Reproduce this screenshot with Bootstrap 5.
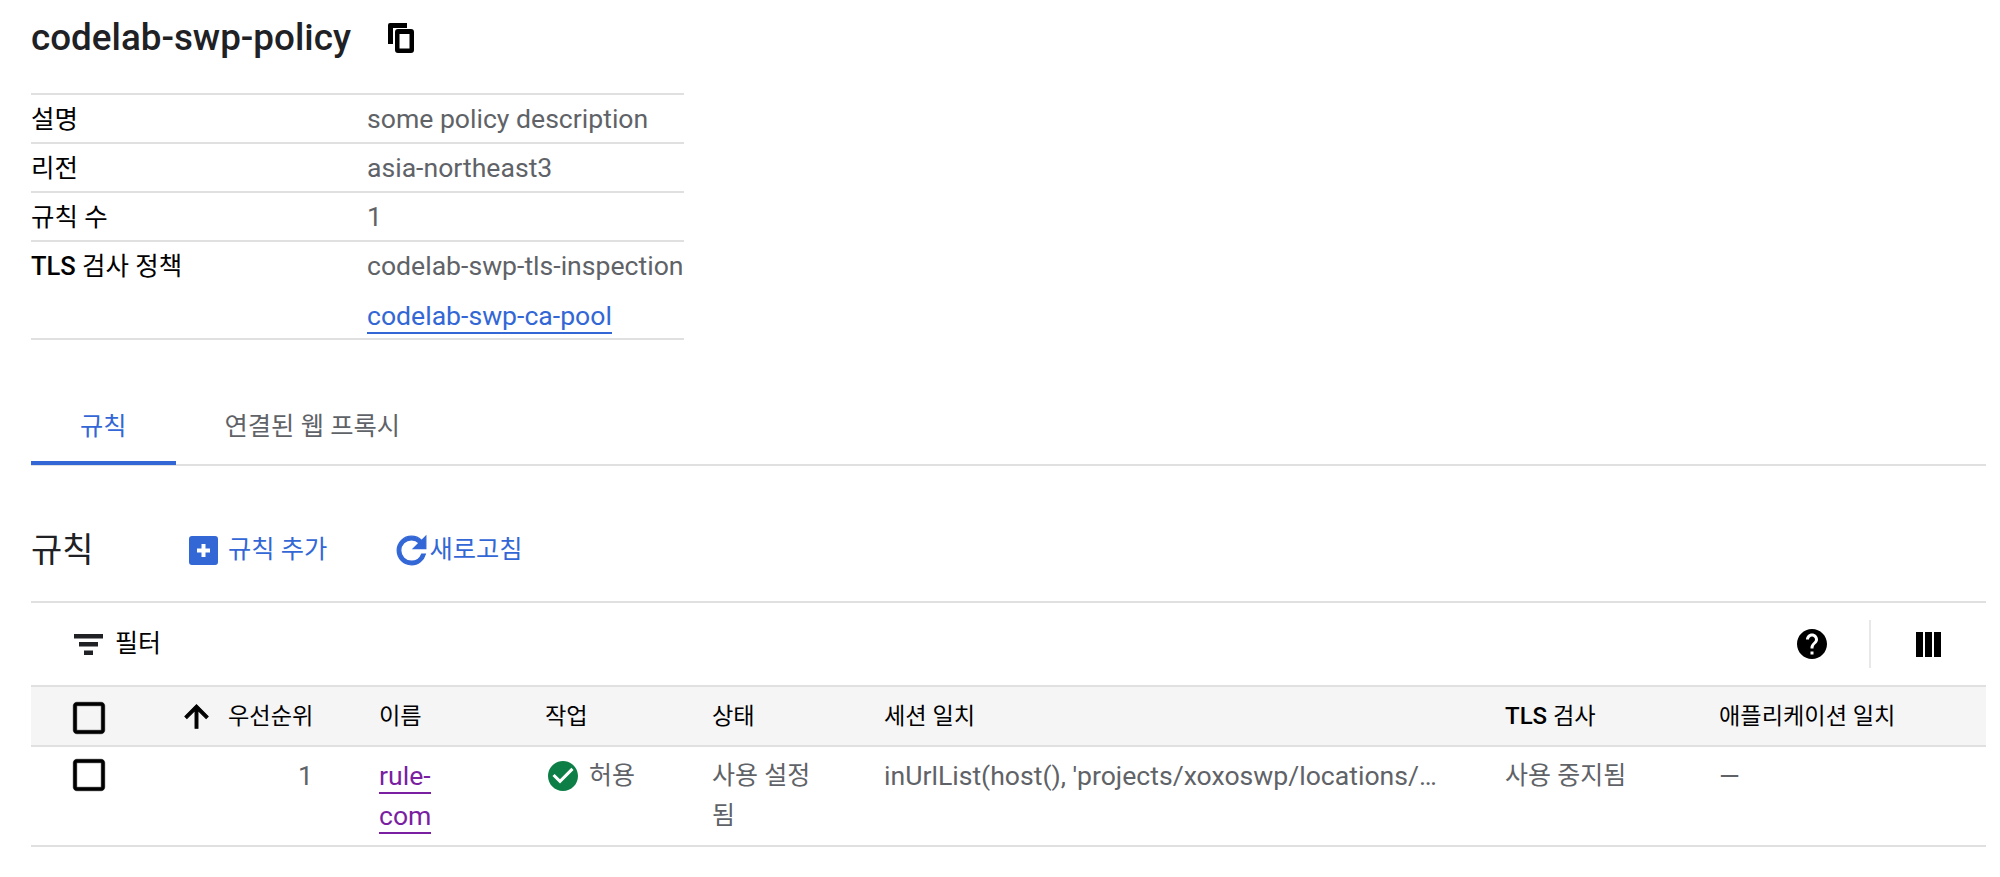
<!DOCTYPE html>
<html lang="ko">

<head>
    <meta charset="UTF-8">
    <title>codelab-swp-policy</title>
    <link href="https://cdn.jsdelivr.net/npm/bootstrap@5.3.0/dist/css/bootstrap.min.css" rel="stylesheet">
    <style>
        body {
            font-family: Roboto, "Noto Sans CJK KR", sans-serif;
            font-size: 26.6px;
            color: #202124;
            background: #fff;
        }

        svg {
            fill: currentColor;
            flex: none;
        }

        .icon-black {
            fill: #000;
        }

        .icon-green {
            fill: #0d7f46;
        }

        .icon-heavy {
            stroke: currentColor;
            stroke-width: .7;
        }

        .ko-text {
            font-size: 25px;
        }

        .policy-page {
            padding: 0 14px 0 31px;
        }

        .policy-title {
            height: 93px;
            padding-bottom: 17px;
            gap: 37px;
        }

        .policy-title h1 {
            font-size: 36.8px;
            font-weight: 500;
            margin: 0;
            color: #202124;
        }

        .info-table {
            width: 653px;
            border-top: 2px solid #e0e0e0;
        }

        .info-row {
            border-bottom: 2px solid #e0e0e0;
            min-height: 49px;
            line-height: 48px;
            height: 49px;
        }

        .info-row.tall-row {
            height: 98px;
        }

        .info-label {
            width: 336px;
            font-size: 25.5px;
            color: #000;
        }

        .info-label b {
            font-weight: 500;
        }

        .info-value {
            color: #5f6368;
            white-space: nowrap;
        }

        .link-line {
            padding-top: 2px;
        }

        .blue-link {
            color: #3367d6;
            text-decoration: none;
            border-bottom: 2px solid #3367d6;
            padding-bottom: 1px;
        }

        .tab-strip {
            margin-top: 49px;
            height: 77px;
            border-bottom: 2px solid #e0e0e0;
        }

        .tab-item {
            color: #5f6368;
            font-size: 25.3px;
            height: 76px;
            line-height: 76px;
            padding: 0 49px;
        }

        .tab-item.selected {
            color: #3367d6;
            border-bottom: 4px solid #3367d6;
        }

        .rules-head {
            height: 137px;
            padding-top: 33px;
            border-bottom: 2px solid #e0e0e0;
        }

        .rules-head h2 {
            font-size: 34px;
            font-weight: 400;
            margin: 0 66px 0 0;
            width: 92px;
        }

        .blue-action {
            color: #3367d6;
            font-size: 25.3px;
        }

        .add-action {
            gap: 10px;
            margin-right: 63px;
        }

        .refresh-action span {
            margin-left: -4px;
        }

        .filter-bar {
            height: 82px;
            padding: 0 45px 0 43px;
        }

        .filter-bar .filter-text {
            font-size: 25px;
            margin-left: 12px;
            color: #000;
        }

        .bar-divider {
            width: 2px;
            height: 48px;
            background: #e8e8e8;
            margin: 0 45px 0 39px;
        }

        .rule-table {
            table-layout: fixed;
            width: 100%;
            margin: 0;
            color: #5f6368;
        }

        .rule-table col:nth-child(1) { width: 144px; }
        .rule-table col:nth-child(2) { width: 188px; }
        .rule-table col:nth-child(3) { width: 166px; }
        .rule-table col:nth-child(4) { width: 167px; }
        .rule-table col:nth-child(5) { width: 172px; }
        .rule-table col:nth-child(6) { width: 621px; }
        .rule-table col:nth-child(7) { width: 214px; }

        .rule-table th,
        .rule-table td {
            padding: 0 16px;
            border: 0;
            box-shadow: none;
            line-height: 40px;
            vertical-align: top;
        }

        .rule-table thead tr {
            border-top: 2px solid #e0e0e0;
            border-bottom: 2px solid #e0e0e0;
        }

        .rule-table th {
            background: #f5f5f5;
            color: #000;
            font-weight: 400;
            font-size: 23.2px;
            height: 60px;
            vertical-align: middle;
        }

        .rule-table th b {
            font-weight: 500;
            font-size: 24px;
        }

        .rule-table tbody tr {
            border-bottom: 2px solid #e0e0e0;
        }

        .rule-table td {
            height: 98px;
            padding-top: 9px;
            padding-bottom: 9px;
        }

        .rule-table td.num-cell {
            padding-right: 50px;
        }

        .visited-link {
            color: #7b1fa2;
            text-decoration: none;
            border-bottom: 2px solid #7b1fa2;
            padding-bottom: 1px;
        }

        .box-icon {
            display: block;
            margin-left: 37px;
            margin-top: 4px;
            stroke: #000;
            stroke-width: .3;
        }

        .box-icon.row-box {
            margin-top: 7px;
        }

        .sort-label {
            margin-left: 14px;
        }
    </style>
</head>

<body>
    <div class="policy-page">
        <div class="policy-title d-flex align-items-center">
            <h1>codelab-swp-policy</h1>
            <svg class="icon-black" width="26" height="30" viewBox="0 0 26 30">
                <path d="M2 0h17v5H5v16H0V2a2 2 0 0 1 2-2z" />
                <path fill-rule="evenodd" d="M10 6h13a3 3 0 0 1 3 3v18a3 3 0 0 1-3 3H10a3 3 0 0 1-3-3V9a3 3 0 0 1 3-3zm1.5 5v14.500h10V11z" />
            </svg>
        </div>

        <div class="info-table">
            <div class="info-row d-flex">
                <div class="info-label">설명</div>
                <div class="info-value">some policy description</div>
            </div>
            <div class="info-row d-flex">
                <div class="info-label">리전</div>
                <div class="info-value">asia-northeast3</div>
            </div>
            <div class="info-row d-flex">
                <div class="info-label">규칙 수</div>
                <div class="info-value">1</div>
            </div>
            <div class="info-row tall-row d-flex">
                <div class="info-label"><b>TLS</b> 검사 정책</div>
                <div class="info-value">
                    <div>codelab-swp-tls-inspection</div>
                    <div class="link-line"><a href="#" class="blue-link">codelab-swp-ca-pool</a></div>
                </div>
            </div>
        </div>

        <div class="tab-strip d-flex">
            <div class="tab-item selected">규칙</div>
            <div class="tab-item">연결된 웹 프록시</div>
        </div>

        <div class="rules-head d-flex align-items-center">
            <h2>규칙</h2>
            <div class="blue-action add-action d-flex align-items-center">
                <svg width="29" height="29" viewBox="0 0 29 29">
                    <path fill-rule="evenodd" d="M3 0h23a3 3 0 0 1 3 3v23a3 3 0 0 1-3 3H3a3 3 0 0 1-3-3V3a3 3 0 0 1 3-3zM12.500 8v4.500H8v4h4.500V21h4v-4.500H21v-4h-4.500V8z" />
                </svg>
                <span>규칙 추가</span>
            </div>
            <div class="blue-action refresh-action d-flex align-items-center">
                <svg class="icon-heavy" width="43" height="43" viewBox="0 0 24 24">
                    <path d="M17.65 6.35C16.2 4.9 14.21 4 12 4c-4.42 0-7.99 3.58-7.99 8s3.57 8 7.99 8c3.73 0 6.84-2.55 7.73-6h-2.08c-.82 2.33-3.04 4-5.65 4-3.31 0-6-2.69-6-6s2.69-6 6-6c1.66 0 3.14.69 4.22 1.78L13 11h7V4l-2.35 2.35z" />
                </svg>
                <span>새로고침</span>
            </div>
        </div>

        <div class="filter-bar d-flex align-items-center">
            <svg width="29" height="21" viewBox="0 0 29 21">
                <path d="M0 0h29v4.500H0zM5 8h19v4.500H5zM10 16.500h9V21h-9z" />
            </svg>
            <span class="filter-text">필터</span>
            <svg class="icon-black ms-auto" width="36" height="36" viewBox="0 0 24 24">
                <path d="M12 2C6.48 2 2 6.48 2 12s4.48 10 10 10 10-4.48 10-10S17.52 2 12 2zm1 17h-2v-2h2v2zm2.070-7.750l-.9.92C13.450 12.900 13 13.500 13 15h-2v-.5c0-1.100.45-2.100 1.170-2.830l1.240-1.260c.37-.36.59-.86.59-1.410 0-1.100-.9-2-2-2s-2 .9-2 2H8c0-2.210 1.790-4 4-4s4 1.790 4 4c0 .88-.36 1.680-.93 2.250z" />
            </svg>
            <div class="bar-divider"></div>
            <svg class="icon-black" width="25" height="25" viewBox="0 0 25 25">
                <path d="M0 0h7v25H0zM9 0h7v25H9zM18 0h7v25h-7z" />
            </svg>
        </div>

        <table class="table rule-table">
            <colgroup>
                <col>
                <col>
                <col>
                <col>
                <col>
                <col>
                <col>
                <col>
            </colgroup>
            <thead>
                <tr>
                    <th class="p-0">
                        <svg class="box-icon icon-black" width="42" height="42" viewBox="0 0 24 24">
                            <path d="M19 5v14H5V5h14m0-2H5c-1.100 0-2 .9-2 2v14c0 1.100.9 2 2 2h14c1.100 0 2-.9 2-2V5c0-1.100-.9-2-2-2z" />
                        </svg>
                    </th>
                    <th class="p-0">
                        <div class="d-flex align-items-center">
                            <svg class="icon-black icon-heavy ms-1" width="35" height="35" viewBox="0 0 24 24">
                                <path d="M4 12l1.410 1.410L11 7.830V20h2V7.830l5.580 5.590L20 12l-8-8-8 8z" />
                            </svg>
                            <span class="sort-label">우선순위</span>
                        </div>
                    </th>
                    <th>이름</th>
                    <th>작업</th>
                    <th>상태</th>
                    <th>세션 일치</th>
                    <th><b>TLS</b> 검사</th>
                    <th>애플리케이션 일치</th>
                </tr>
            </thead>
            <tbody>
                <tr>
                    <td class="p-0">
                        <svg class="box-icon row-box icon-black" width="42" height="42" viewBox="0 0 24 24">
                            <path d="M19 5v14H5V5h14m0-2H5c-1.100 0-2 .9-2 2v14c0 1.100.9 2 2 2h14c1.100 0 2-.9 2-2V5c0-1.100-.9-2-2-2z" />
                        </svg>
                    </td>
                    <td class="num-cell text-end">1</td>
                    <td><a href="#" class="visited-link">rule-</a><br><a href="#" class="visited-link">com</a></td>
                    <td>
                        <div class="d-flex align-items-center gap-2">
                            <svg class="icon-green" width="36" height="36" viewBox="0 0 24 24">
                                <path d="M12 2C6.480 2 2 6.480 2 12s4.480 10 10 10 10-4.480 10-10S17.520 2 12 2zm-2 15l-5-5 1.410-1.410L10 14.170l7.590-7.590L19 8l-9 9z" />
                            </svg>
                            <span class="ko-text">허용</span>
                        </div>
                    </td>
                    <td class="ko-text">사용 설정<br>됨</td>
                    <td class="text-nowrap">inUrlList(host(), 'projects/xoxoswp/locations/…</td>
                    <td class="ko-text">사용 중지됨</td>
                    <td>—</td>
                </tr>
            </tbody>
        </table>
    </div>

    <script src="https://cdn.jsdelivr.net/npm/bootstrap@5.3.0/dist/js/bootstrap.bundle.min.js"></script>
</body>

</html>
